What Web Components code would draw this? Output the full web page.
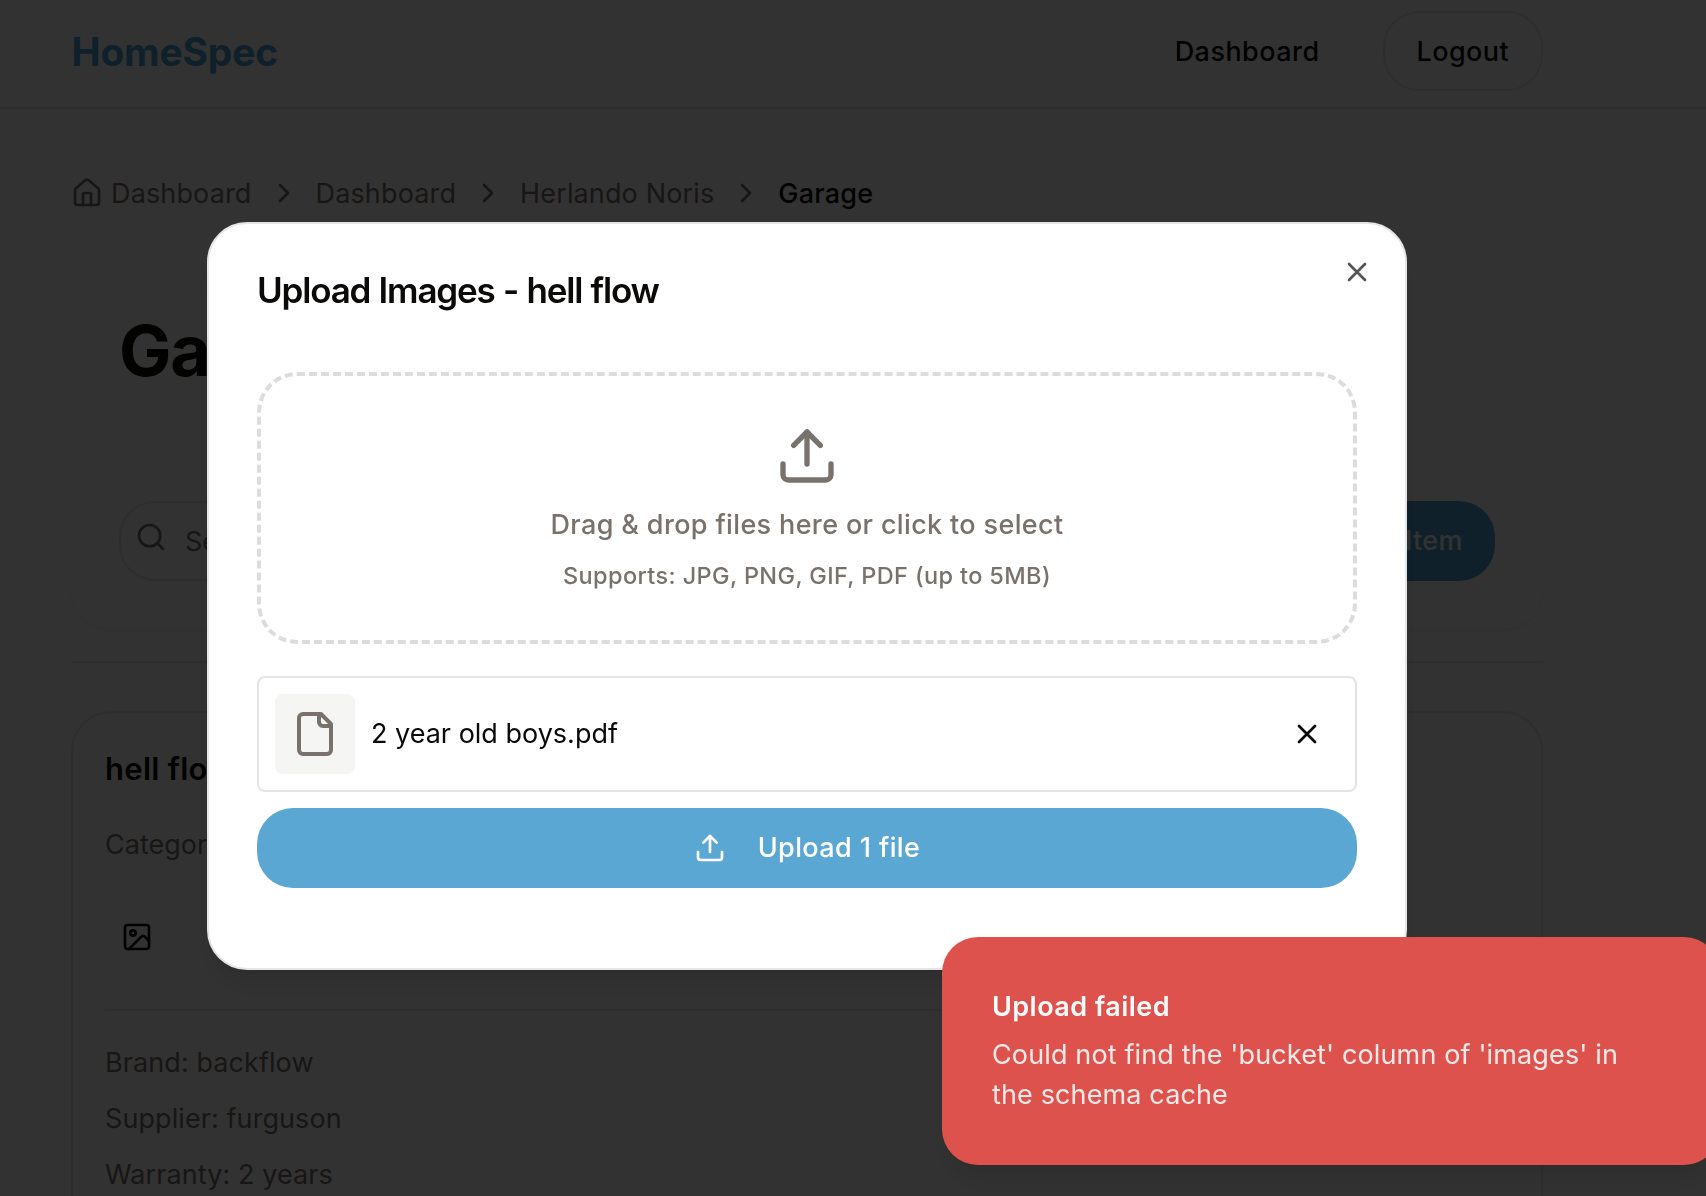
<!DOCTYPE html>
<html lang="en">
<head>
<meta charset="utf-8">
<title>HomeSpec</title>
<style>
  :root {
    --bg: #fafafa;
    --fg: #0c0a09;
    --muted: #78716c;
    --border: #e5e5e5;
    --primary: #4b9fd0;
  }
  html, body { margin: 0; height: 100%; overflow: hidden; background: var(--bg); }
  body { font: 400 27px/40px Inter, "Liberation Sans", sans-serif; color: var(--fg); }
</style>
</head>
<body>
<hs-app></hs-app>
<script>
const define = (name, html) => customElements.define(name, class extends HTMLElement {
  connectedCallback() {
    if (this.shadowRoot) return;
    const t = document.createElement('template');
    t.innerHTML = typeof html === 'function' ? html(this) : html;
    this.attachShadow({ mode: 'open' }).append(t.content.cloneNode(true));
  }
});

const ICONS = {
  house: '<path d="M15 21v-8a1 1 0 0 0-1-1h-4a1 1 0 0 0-1 1v8"/><path d="M3 10a2 2 0 0 1 .709-1.528l7-5.999a2 2 0 0 1 2.582 0l7 5.999A2 2 0 0 1 21 10v9a2 2 0 0 1-2 2H5a2 2 0 0 1-2-2z"/>',
  chevron: '<path d="m9 18 6-6-6-6"/>',
  search: '<circle cx="11" cy="11" r="8"/><path d="m21 21-4.3-4.3"/>',
  plus: '<path d="M5 12h14M12 5v14"/>',
  image: '<rect x="3" y="3" width="18" height="18" rx="2"/><circle cx="9" cy="9" r="2"/><path d="m21 15-3.086-3.086a2 2 0 0 0-2.828 0L6 21"/>',
  upload: '<path d="M21 15v4a2 2 0 0 1-2 2H5a2 2 0 0 1-2-2v-4"/><path d="m17 8-5-5-5 5"/><path d="M12 3v12"/>',
  file: '<path d="M15 2H6a2 2 0 0 0-2 2v16a2 2 0 0 0 2 2h12a2 2 0 0 0 2-2V7Z"/><path d="M14 2v4a2 2 0 0 0 2 2h4"/>',
  x: '<path d="M18 6 6 18"/><path d="m6 6 12 12"/>'
};

define('hs-icon', el => `
  <style>
    :host { display: block; flex: none; width: 32px; height: 32px; }
    svg { display: block; width: 100%; height: 100%; }
  </style>
  <svg viewBox="0 0 24 24" fill="none" stroke="currentColor" stroke-width="2" stroke-linecap="round" stroke-linejoin="round">${ICONS[el.getAttribute('name')]}</svg>`);

define('hs-button', `
  <style>
    :host { display: flex; align-items: center; justify-content: center; box-sizing: border-box; height: 80px; padding: 0 32px; border-radius: 36px; font-weight: 500; letter-spacing: .4px; white-space: nowrap; }
    :host([variant=outline]) { border: 2px solid var(--border); padding: 2px 32px 0 32px; }
    :host([variant=primary]) { background: var(--primary); color: #fafaf9; }
    :host([variant=hover]) { background: #5ba7d4; color: #fff; }
    ::slotted(hs-icon) { margin-right: 32px; }
  </style>
  <slot></slot>`);

define('hs-header', `
  <style>
    :host { display: block; padding: 11px 163px 16px 71px; border-bottom: 2px solid var(--border); }
    .row { display: flex; align-items: center; justify-content: space-between; height: 80px; }
    .logo { font-size: 39px; font-weight: 700; letter-spacing: -.22px; color: var(--primary); padding: 2px 0 0 .5px; }
    nav { display: flex; align-items: center; gap: 63px; }
    .link { font-weight: 500; letter-spacing: .45px; padding-top: 2px; }
  </style>
  <div class="row">
    <div class="logo">HomeSpec</div>
    <nav><span class="link">Dashboard</span><hs-button variant="outline">Logout</hs-button></nav>
  </div>`);

define('hs-breadcrumb', `
  <style>
    :host { display: flex; align-items: center; gap: 16px; height: 40px; color: var(--muted); letter-spacing: .14px; }
    .home { display: flex; align-items: center; gap: 8px; }
    .crumb { padding-top: 2px; }
    .here { color: var(--fg); font-weight: 500; letter-spacing: .22px; }
  </style>
  <span class="home"><hs-icon name="house"></hs-icon><span class="crumb">Dashboard</span></span>
  <hs-icon name="chevron"></hs-icon><span class="crumb">Dashboard</span>
  <hs-icon name="chevron"></hs-icon><span class="crumb">Herlando Noris</span>
  <hs-icon name="chevron"></hs-icon><span class="crumb here">Garage</span>`);

define('hs-room-card', `
  <style>
    :host { display: block; box-sizing: border-box; height: 372px; padding: 54px 48px 48px; border-radius: 40px; box-shadow: 0 2px 4px rgba(0,0,0,.06); }
    h1 { margin: 0; font-size: 70px; line-height: 80px; font-weight: 700; letter-spacing: -1.3px; }
    .tools { display: flex; gap: 32px; margin-top: 110px; }
    .search { flex: 1; display: flex; align-items: center; box-sizing: border-box; height: 80px; padding: 0 14px; gap: 18px; border: 2px solid var(--border); border-radius: 36px; color: var(--muted); }
    .search hs-icon { margin-top: -8px; }
    .search span { padding-top: 2px; }
  </style>
  <h1>Garage</h1>
  <div class="tools">
    <div class="search"><hs-icon name="search"></hs-icon><span>Search</span></div>
    <hs-button variant="primary"><hs-icon name="plus"></hs-icon>Add Item</hs-button>
  </div>`);

define('hs-item-card', `
  <style>
    :host { display: block; box-sizing: border-box; height: 620px; padding: 36px 32px; border: 2px solid var(--border); border-radius: 40px; }
    h3 { margin: 0; font-size: 31px; line-height: 40px; font-weight: 600; letter-spacing: .3px; }
    .cat { margin-top: 36px; color: var(--muted); }
    .actions { display: flex; height: 32px; padding-left: 16px; margin-top: 56px; }
    hr { margin: 56px 0 0; border: 0; border-top: 2px solid var(--border); }
    .facts { display: flex; flex-direction: column; gap: 16px; margin-top: 32px; color: var(--muted); letter-spacing: .08px; }
  </style>
  <h3>hell flow</h3>
  <div class="cat">Category</div>
  <div class="actions"><hs-icon name="image"></hs-icon></div>
  <hr>
  <div class="facts"><span>Brand: backflow</span><span>Supplier: furguson</span><span>Warranty: 2 years</span></div>`);

define('hs-dropzone', `
  <style>
    :host { display: flex; flex-direction: column; align-items: center; box-sizing: border-box; height: 272px; padding-top: 48px; border: 4px dashed #dddcda; border-radius: 40px; color: var(--muted); font-weight: 500; }
    hs-icon { width: 64px; height: 64px; }
    .main { margin-top: 17px; letter-spacing: .352px; }
    .hint { margin-top: 15px; font-size: 23.5px; line-height: 32px; letter-spacing: .376px; }
  </style>
  <hs-icon name="upload"></hs-icon>
  <div class="main">Drag &amp; drop files here or click to select</div>
  <div class="hint">Supports: JPG, PNG, GIF, PDF (up to 5MB)</div>`);

define('hs-file-row', `
  <style>
    :host { display: flex; align-items: center; box-sizing: border-box; height: 116px; padding: 0 32px 0 16px; border: 2px solid var(--border); border-radius: 8px; }
    .thumb { display: flex; align-items: center; justify-content: center; width: 80px; height: 80px; border-radius: 8px; background: #f5f5f4; color: var(--muted); }
    .thumb hs-icon { width: 48px; height: 48px; }
    .name { flex: 1; padding-left: 16px; }
  </style>
  <div class="thumb"><hs-icon name="file"></hs-icon></div>
  <div class="name"><slot></slot></div>
  <hs-icon name="x"></hs-icon>`);

define('hs-dialog', `
  <style>
    :host { display: flex; flex-direction: column; box-sizing: border-box; width: 1200px; height: 748px; padding: 46px 48px; border: 2px solid var(--border); border-radius: 40px; background: #fff; box-shadow: 0 20px 30px -6px rgba(0,0,0,.1), 0 8px 12px -8px rgba(0,0,0,.1); }
    .head { display: flex; justify-content: space-between; align-items: flex-start; height: 102px; }
    h2 { margin: 0; font-size: 35px; line-height: 40px; font-weight: 600; letter-spacing: -1.18px; word-spacing: .7px; }
    .head hs-icon { color: #555453; margin: -14px -16px 0 0; }
    hs-file-row { margin-top: 32px; }
    hs-button { margin-top: 16px; }
  </style>
  <div class="head"><h2>Upload Images - hell flow</h2><hs-icon name="x"></hs-icon></div>
  <hs-dropzone></hs-dropzone>
  <hs-file-row>2 year old boys.pdf</hs-file-row>
  <hs-button variant="hover"><hs-icon name="upload"></hs-icon>Upload 1 file</hs-button>`);

define('hs-toast', `
  <style>
    :host { display: block; box-sizing: border-box; width: 778px; height: 228px; padding: 50px 80px 50px 50px; border-radius: 36px; background: #dd524c; color: #fafaf9; box-shadow: 0 20px 30px -6px rgba(0,0,0,.1), 0 8px 12px -8px rgba(0,0,0,.1); }
    .title { font-weight: 600; letter-spacing: .454px; margin-bottom: 8px; }
    .body { opacity: .9; letter-spacing: .13px; }
  </style>
  <div class="title"><slot name="title"></slot></div>
  <div class="body"><slot></slot></div>`);

define('hs-app', `
  <style>
    :host { display: block; height: 1196px; overflow: hidden; }
    main { display: flex; flex-direction: column; padding: 64px 163px 0 71px; }
    hs-room-card { margin-top: 44px; }
    .rule { height: 2px; background: var(--border); margin: 32px 0 48px; }
    .backdrop { position: fixed; inset: 0; background: rgba(0,0,0,.8); }
    hs-dialog { position: fixed; left: 207px; top: 222px; }
    hs-toast { position: fixed; left: 942px; top: 937px; }
  </style>
  <hs-header></hs-header>
  <main>
    <hs-breadcrumb></hs-breadcrumb>
    <hs-room-card></hs-room-card>
    <div class="rule"></div>
    <hs-item-card></hs-item-card>
  </main>
  <div class="backdrop"></div>
  <hs-dialog></hs-dialog>
  <hs-toast><span slot="title">Upload failed</span>Could not find the 'bucket' column of 'images' in the schema cache</hs-toast>`);
</script>
</body>
</html>
